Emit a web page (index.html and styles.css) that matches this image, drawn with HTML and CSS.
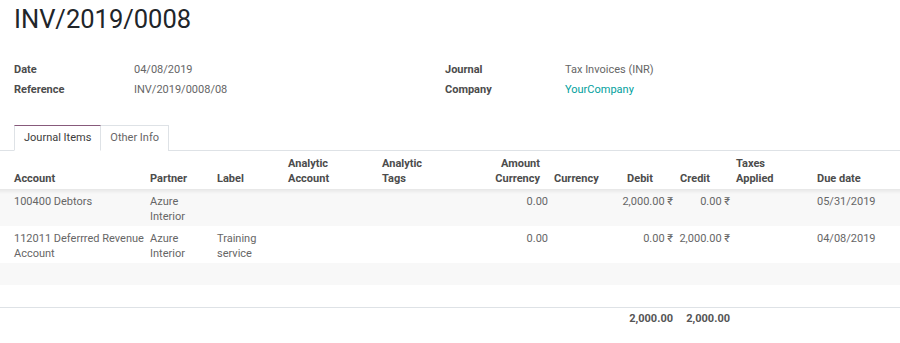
FILE: index.html
```html
<!DOCTYPE html>
<html lang="en">
<head>
  <meta charset="UTF-8">
  <title>INV/2019/0008</title>
  <link rel="stylesheet" href="styles.css">
</head>
<body>
  <h1 class="title">INV/2019/0008</h1>

  <div class="info">
    <div class="group">
      <div class="field"><span class="field-label">Date</span><span>04/08/2019</span></div>
      <div class="field"><span class="field-label">Reference</span><span>INV/2019/0008/08</span></div>
    </div>
    <div class="group">
      <div class="field"><span class="field-label">Journal</span><span>Tax Invoices (INR)</span></div>
      <div class="field"><span class="field-label">Company</span><a class="link" href="#">YourCompany</a></div>
    </div>
  </div>

  <ul class="tabs">
    <li class="tab active">Journal Items</li>
    <li class="tab">Other Info</li>
  </ul>

  <table class="lines">
    <colgroup>
      <col style="width:147px">
      <col style="width:67px">
      <col style="width:71px">
      <col style="width:94px">
      <col style="width:99px">
      <col style="width:73px">
      <col style="width:63px">
      <col style="width:62px">
      <col style="width:57px">
      <col style="width:81px">
      <col style="width:86px">
    </colgroup>
    <thead>
      <tr>
        <th class="first">Account</th>
        <th>Partner</th>
        <th>Label</th>
        <th>Analytic<br>Account</th>
        <th>Analytic<br>Tags</th>
        <th class="num num-amount">Amount<br>Currency</th>
        <th>Currency</th>
        <th class="num num-money">Debit</th>
        <th class="num num-money">Credit</th>
        <th>Taxes<br>Applied</th>
        <th>Due date</th>
      </tr>
    </thead>
    <tbody>
      <tr class="data-row">
        <td class="first">100400 Debtors</td>
        <td>Azure Interior</td>
        <td></td>
        <td></td>
        <td></td>
        <td class="num">0.00</td>
        <td></td>
        <td class="num">2,000.00&nbsp;₹</td>
        <td class="num">0.00&nbsp;₹</td>
        <td></td>
        <td>05/31/2019</td>
      </tr>
      <tr class="data-row">
        <td class="first">112011 Deferrred Revenue Account</td>
        <td>Azure Interior</td>
        <td>Training service</td>
        <td></td>
        <td></td>
        <td class="num">0.00</td>
        <td></td>
        <td class="num">0.00&nbsp;₹</td>
        <td class="num">2,000.00&nbsp;₹</td>
        <td></td>
        <td>04/08/2019</td>
      </tr>
      <tr class="empty-row"><td colspan="11">&nbsp;</td></tr>
      <tr class="empty-row"><td colspan="11">&nbsp;</td></tr>
    </tbody>
    <tfoot>
      <tr>
        <td colspan="7"></td>
        <td class="num">2,000.00</td>
        <td class="num">2,000.00</td>
        <td colspan="2"></td>
      </tr>
    </tfoot>
  </table>
</body>
</html>
```

FILE: styles.css
```css
body {
  margin: 0;
  font-family: Roboto, "Noto Sans", sans-serif;
  font-size: 11px;
  color: #666666;
  background: white;
}

.title {
  margin: 0;
  padding: 4px 14px 0;
  font-size: 25.5px;
  line-height: 31px;
  font-weight: normal;
  color: #212529;
}

.info {
  display: grid;
  grid-template-columns: 431px 431px;
  padding: 0 14px;
  margin-top: 25px;
}

.field {
  display: flex;
  line-height: 20px;
}

.field-label {
  width: 120px;
  font-weight: bold;
  color: #4c4c4c;
}

.link {
  color: #00a09d;
  text-decoration: none;
}

.tabs {
  display: flex;
  list-style: none;
  margin: 25px 0 0;
  padding: 0 0 0 14px;
  border-bottom: 1px solid #dee2e6;
}

.tab {
  padding: 0 9px;
  line-height: 24px;
  border: 1px solid #dee2e6;
  border-bottom: none;
  margin-right: -1px;
  margin-bottom: -1px;
  background: white;
}

.tab.active {
  color: #3c3c3c;
  border-top-color: #875a7b;
  border-bottom: 1px solid white;
  position: relative;
  z-index: 1;
}

.lines {
  width: 900px;
  table-layout: fixed;
  border-collapse: collapse;
}

.lines th,
.lines td {
  padding: 5px 3px 2px;
  line-height: 15px;
  text-align: left;
}

.lines th {
  font-weight: bold;
  color: #4c4c4c;
  vertical-align: bottom;
  padding-bottom: 3px;
}

.lines td {
  vertical-align: top;
}

.lines .first {
  padding-left: 14px;
}

.lines .num {
  text-align: right;
}

.lines th.num-amount {
  padding-right: 11px;
}

.lines th.num-money {
  padding-right: 23px;
}

.data-row:nth-child(odd),
.empty-row:nth-child(odd) {
  background: #f8f8f8;
}

.data-row:first-child td {
  background-image: linear-gradient(to bottom, rgba(0, 0, 0, 0.07), rgba(0, 0, 0, 0) 5px);
}

.empty-row td {
  padding: 4px 3px 3px;
}

.lines tfoot td {
  border-top: 1px solid #dee2e6;
  font-weight: bold;
  color: #555555;
  padding-top: 3px;
}
```
